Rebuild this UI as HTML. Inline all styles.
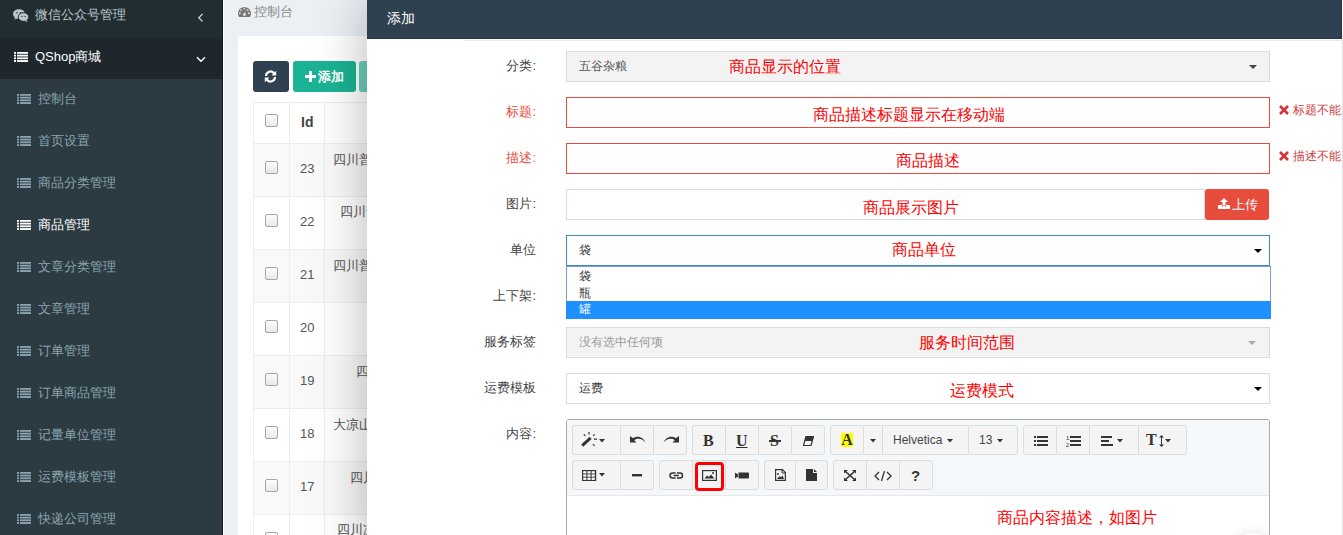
<!DOCTYPE html>
<html><head><meta charset="utf-8">
<style>
*{box-sizing:border-box;margin:0;padding:0}
html,body{width:1343px;height:535px;overflow:hidden;background:#ecf0f5;font-family:"Liberation Sans",sans-serif;font-size:13px;color:#676a6c}
.abs{position:absolute}
#sb{position:absolute;left:0;top:0;width:222px;height:535px;background:#222d32}
#sbline{position:absolute;left:222px;top:0;width:1px;height:535px;background:#151c20}
#sbline2{position:absolute;left:223px;top:0;width:1px;height:535px;background:#fff}
.mi{position:absolute;left:0;width:222px;color:#b8c7ce;font-size:13px;line-height:20px}
.sub{position:absolute;left:0;width:222px;color:#8aa4af;font-size:13px;line-height:20px}
.lic{position:absolute;width:14px;height:10px}
.lic i{position:absolute;left:0;width:14px;height:2px;background:currentColor}
.txt{position:absolute;white-space:nowrap}
/* content */
#box{position:absolute;left:238px;top:36px;width:200px;height:520px;background:#fff;border-radius:3px}
.btn{position:absolute;border-radius:3px;color:#fff}
table{border-collapse:collapse}
/* dialog */
#dlg{position:absolute;left:367px;top:0;width:975px;height:560px;background:#fff;overflow:hidden;box-shadow:1px 1px 50px rgba(0,0,0,.3)}
#dhd{position:absolute;left:0;top:0;width:975px;height:39px;background:#2f4050;color:#fff;font-size:14px;font-weight:normal}
.lbl{position:absolute;width:120px;text-align:right;font-size:13px;color:#333;white-space:nowrap}
.inp{position:absolute;left:199px;width:704px;height:31px;border:1px solid #e5e6e7;background:#fff}
.red{color:#cc5965}
.ann{position:absolute;color:#ff0000;font-size:16px;white-space:nowrap;line-height:18px}
.caret{position:absolute;width:0;height:0;border-left:4px solid transparent;border-right:4px solid transparent;border-top:4px solid #333}
.cb{width:13px;height:13px;border:1px solid #a6a6a6;border-radius:2px;background:linear-gradient(#fdfdfd,#e8e8e8)}
</style></head><body>
<div id="sb">
<div class="abs" style="left:0;top:37px;width:222px;height:42px;background:#1e282c"></div>
<div class="abs" style="left:0;top:79px;width:222px;height:456px;background:#2c3b41"></div>
<svg class="abs" style="left:13px;top:9px" width="16" height="13" viewBox="0 0 16 13"><ellipse cx="6" cy="5" rx="6" ry="4.8" fill="#b8c7ce"/><path d="M2 8 L1.5 10.5 L4.5 9 Z" fill="#b8c7ce"/><ellipse cx="10.5" cy="8" rx="5.3" ry="4.3" fill="#b8c7ce" stroke="#222d32" stroke-width="1"/><path d="M13.5 11 L14.5 13 L11.5 12 Z" fill="#b8c7ce"/><circle cx="4" cy="3.8" r=".8" fill="#222d32"/><circle cx="7.6" cy="3.8" r=".8" fill="#222d32"/><circle cx="9" cy="7.4" r=".7" fill="#222d32"/><circle cx="12.2" cy="7.4" r=".7" fill="#222d32"/></svg>
<div class="txt" style="left:35px;top:5px;color:#b8c7ce;font-size:13px;line-height:20px">微信公众号管理</div>
<svg class="abs" style="left:197px;top:13px" width="7" height="10" viewBox="0 0 7 10"><path d="M5.5 1 L1.8 4.8 L5.5 8.6" fill="none" stroke="#b8c7ce" stroke-width="1.4"/></svg>
<svg class="abs" style="left:14px;top:52px" width="14" height="10" viewBox="0 0 14 10" fill="#fff"><rect x="0" y="0" width="2" height="1.8"/><rect x="3" y="0" width="11" height="1.8"/><rect x="0" y="2.7" width="2" height="1.8"/><rect x="3" y="2.7" width="11" height="1.8"/><rect x="0" y="5.4" width="2" height="1.8"/><rect x="3" y="5.4" width="11" height="1.8"/><rect x="0" y="8.1" width="2" height="1.9"/><rect x="3" y="8.1" width="11" height="1.9"/></svg>
<div class="txt" style="left:35px;top:47px;color:#fff;font-size:13px;line-height:20px;font-weight:normal">QShop商城</div>
<svg class="abs" style="left:196px;top:56px" width="10" height="7" viewBox="0 0 10 7"><path d="M1 1.2 L5 5.2 L9 1.2" fill="none" stroke="#fff" stroke-width="1.4"/></svg>
<svg class="abs" style="left:17px;top:94px" width="14" height="10" viewBox="0 0 14 10" fill="#8aa4af"><rect x="0" y="0" width="2" height="1.8"/><rect x="3" y="0" width="11" height="1.8"/><rect x="0" y="2.7" width="2" height="1.8"/><rect x="3" y="2.7" width="11" height="1.8"/><rect x="0" y="5.4" width="2" height="1.8"/><rect x="3" y="5.4" width="11" height="1.8"/><rect x="0" y="8.1" width="2" height="1.9"/><rect x="3" y="8.1" width="11" height="1.9"/></svg>
<div class="txt" style="left:38px;top:89px;color:#8aa4af;font-size:13px;line-height:20px;font-weight:normal">控制台</div>
<svg class="abs" style="left:17px;top:136px" width="14" height="10" viewBox="0 0 14 10" fill="#8aa4af"><rect x="0" y="0" width="2" height="1.8"/><rect x="3" y="0" width="11" height="1.8"/><rect x="0" y="2.7" width="2" height="1.8"/><rect x="3" y="2.7" width="11" height="1.8"/><rect x="0" y="5.4" width="2" height="1.8"/><rect x="3" y="5.4" width="11" height="1.8"/><rect x="0" y="8.1" width="2" height="1.9"/><rect x="3" y="8.1" width="11" height="1.9"/></svg>
<div class="txt" style="left:38px;top:131px;color:#8aa4af;font-size:13px;line-height:20px;font-weight:normal">首页设置</div>
<svg class="abs" style="left:17px;top:178px" width="14" height="10" viewBox="0 0 14 10" fill="#8aa4af"><rect x="0" y="0" width="2" height="1.8"/><rect x="3" y="0" width="11" height="1.8"/><rect x="0" y="2.7" width="2" height="1.8"/><rect x="3" y="2.7" width="11" height="1.8"/><rect x="0" y="5.4" width="2" height="1.8"/><rect x="3" y="5.4" width="11" height="1.8"/><rect x="0" y="8.1" width="2" height="1.9"/><rect x="3" y="8.1" width="11" height="1.9"/></svg>
<div class="txt" style="left:38px;top:173px;color:#8aa4af;font-size:13px;line-height:20px;font-weight:normal">商品分类管理</div>
<svg class="abs" style="left:17px;top:220px" width="14" height="10" viewBox="0 0 14 10" fill="#fff"><rect x="0" y="0" width="2" height="1.8"/><rect x="3" y="0" width="11" height="1.8"/><rect x="0" y="2.7" width="2" height="1.8"/><rect x="3" y="2.7" width="11" height="1.8"/><rect x="0" y="5.4" width="2" height="1.8"/><rect x="3" y="5.4" width="11" height="1.8"/><rect x="0" y="8.1" width="2" height="1.9"/><rect x="3" y="8.1" width="11" height="1.9"/></svg>
<div class="txt" style="left:38px;top:215px;color:#fff;font-size:13px;line-height:20px;font-weight:normal">商品管理</div>
<svg class="abs" style="left:17px;top:262px" width="14" height="10" viewBox="0 0 14 10" fill="#8aa4af"><rect x="0" y="0" width="2" height="1.8"/><rect x="3" y="0" width="11" height="1.8"/><rect x="0" y="2.7" width="2" height="1.8"/><rect x="3" y="2.7" width="11" height="1.8"/><rect x="0" y="5.4" width="2" height="1.8"/><rect x="3" y="5.4" width="11" height="1.8"/><rect x="0" y="8.1" width="2" height="1.9"/><rect x="3" y="8.1" width="11" height="1.9"/></svg>
<div class="txt" style="left:38px;top:257px;color:#8aa4af;font-size:13px;line-height:20px;font-weight:normal">文章分类管理</div>
<svg class="abs" style="left:17px;top:304px" width="14" height="10" viewBox="0 0 14 10" fill="#8aa4af"><rect x="0" y="0" width="2" height="1.8"/><rect x="3" y="0" width="11" height="1.8"/><rect x="0" y="2.7" width="2" height="1.8"/><rect x="3" y="2.7" width="11" height="1.8"/><rect x="0" y="5.4" width="2" height="1.8"/><rect x="3" y="5.4" width="11" height="1.8"/><rect x="0" y="8.1" width="2" height="1.9"/><rect x="3" y="8.1" width="11" height="1.9"/></svg>
<div class="txt" style="left:38px;top:299px;color:#8aa4af;font-size:13px;line-height:20px;font-weight:normal">文章管理</div>
<svg class="abs" style="left:17px;top:346px" width="14" height="10" viewBox="0 0 14 10" fill="#8aa4af"><rect x="0" y="0" width="2" height="1.8"/><rect x="3" y="0" width="11" height="1.8"/><rect x="0" y="2.7" width="2" height="1.8"/><rect x="3" y="2.7" width="11" height="1.8"/><rect x="0" y="5.4" width="2" height="1.8"/><rect x="3" y="5.4" width="11" height="1.8"/><rect x="0" y="8.1" width="2" height="1.9"/><rect x="3" y="8.1" width="11" height="1.9"/></svg>
<div class="txt" style="left:38px;top:341px;color:#8aa4af;font-size:13px;line-height:20px;font-weight:normal">订单管理</div>
<svg class="abs" style="left:17px;top:388px" width="14" height="10" viewBox="0 0 14 10" fill="#8aa4af"><rect x="0" y="0" width="2" height="1.8"/><rect x="3" y="0" width="11" height="1.8"/><rect x="0" y="2.7" width="2" height="1.8"/><rect x="3" y="2.7" width="11" height="1.8"/><rect x="0" y="5.4" width="2" height="1.8"/><rect x="3" y="5.4" width="11" height="1.8"/><rect x="0" y="8.1" width="2" height="1.9"/><rect x="3" y="8.1" width="11" height="1.9"/></svg>
<div class="txt" style="left:38px;top:383px;color:#8aa4af;font-size:13px;line-height:20px;font-weight:normal">订单商品管理</div>
<svg class="abs" style="left:17px;top:430px" width="14" height="10" viewBox="0 0 14 10" fill="#8aa4af"><rect x="0" y="0" width="2" height="1.8"/><rect x="3" y="0" width="11" height="1.8"/><rect x="0" y="2.7" width="2" height="1.8"/><rect x="3" y="2.7" width="11" height="1.8"/><rect x="0" y="5.4" width="2" height="1.8"/><rect x="3" y="5.4" width="11" height="1.8"/><rect x="0" y="8.1" width="2" height="1.9"/><rect x="3" y="8.1" width="11" height="1.9"/></svg>
<div class="txt" style="left:38px;top:425px;color:#8aa4af;font-size:13px;line-height:20px;font-weight:normal">记量单位管理</div>
<svg class="abs" style="left:17px;top:472px" width="14" height="10" viewBox="0 0 14 10" fill="#8aa4af"><rect x="0" y="0" width="2" height="1.8"/><rect x="3" y="0" width="11" height="1.8"/><rect x="0" y="2.7" width="2" height="1.8"/><rect x="3" y="2.7" width="11" height="1.8"/><rect x="0" y="5.4" width="2" height="1.8"/><rect x="3" y="5.4" width="11" height="1.8"/><rect x="0" y="8.1" width="2" height="1.9"/><rect x="3" y="8.1" width="11" height="1.9"/></svg>
<div class="txt" style="left:38px;top:467px;color:#8aa4af;font-size:13px;line-height:20px;font-weight:normal">运费模板管理</div>
<svg class="abs" style="left:17px;top:514px" width="14" height="10" viewBox="0 0 14 10" fill="#8aa4af"><rect x="0" y="0" width="2" height="1.8"/><rect x="3" y="0" width="11" height="1.8"/><rect x="0" y="2.7" width="2" height="1.8"/><rect x="3" y="2.7" width="11" height="1.8"/><rect x="0" y="5.4" width="2" height="1.8"/><rect x="3" y="5.4" width="11" height="1.8"/><rect x="0" y="8.1" width="2" height="1.9"/><rect x="3" y="8.1" width="11" height="1.9"/></svg>
<div class="txt" style="left:38px;top:509px;color:#8aa4af;font-size:13px;line-height:20px;font-weight:normal">快递公司管理</div>
</div>
<div id="sbline"></div><div id="sbline2"></div>
<svg class="abs" style="left:238px;top:7px" width="13" height="10" viewBox="0 0 13 10"><path d="M1 10 A6.5 6.5 0 1 1 12 10 Z" fill="#777"/><circle cx="6.4" cy="1.5" r=".85" fill="#eef1f5"/><circle cx="3" cy="3" r=".85" fill="#eef1f5"/><circle cx="9.6" cy="3" r=".85" fill="#eef1f5"/><circle cx="1.9" cy="6.2" r=".85" fill="#eef1f5"/><circle cx="10.9" cy="6.2" r=".85" fill="#eef1f5"/><circle cx="6.4" cy="7.6" r="1.3" fill="#eef1f5"/><path d="M6.1 7.4 L7.6 3.2 L7.1 7.6 Z" fill="#eef1f5"/></svg>
<div class="txt" style="left:254px;top:2px;color:#888;font-size:13px;line-height:20px">控制台</div>
<div id="box"></div>
<div class="btn" style="left:253px;top:61px;width:36px;height:31px;background:#2f4050"><svg class="abs" style="left:11px;top:9px" width="13" height="13" viewBox="0 0 13 13"><path d="M2 6 A4.5 4.5 0 0 1 10.3 3.6" fill="none" stroke="#fff" stroke-width="2.2"/><path d="M12.2 0.8 L12.2 5.5 L7.5 5.5 Z" fill="#fff"/><path d="M11 7 A4.5 4.5 0 0 1 2.7 9.4" fill="none" stroke="#fff" stroke-width="2.2"/><path d="M0.8 12.2 L0.8 7.5 L5.5 7.5 Z" fill="#fff"/></svg></div>
<div class="btn" style="left:293px;top:61px;width:63px;height:31px;background:#1ab394"><svg class="abs" style="left:12px;top:10px" width="11" height="11" viewBox="0 0 11 11"><rect x="4" y="0" width="3" height="11" fill="#fff"/><rect x="0" y="4" width="11" height="3" fill="#fff"/></svg><span class="txt" style="left:25px;top:6px;font-size:13px;line-height:20px;color:#fff;font-weight:bold">添加</span></div>
<div class="btn" style="left:359px;top:61px;width:60px;height:31px;background:#1ab394;opacity:.65"></div>
<div class="abs" style="left:253px;top:102px;width:200px;height:433px;background:#fff;border-left:1px solid #ededed;border-top:1px solid #ededed"></div>
<div class="abs" style="left:254px;top:143px;width:200px;height:53px;background:#f9f9f9;border-top:1px solid #ededed"></div>
<div class="abs cb" style="left:265px;top:161px"></div>
<div class="txt" style="left:300px;top:159px;font-size:13px;line-height:20px;color:#555">23</div>
<div class="txt" style="left:333px;top:150px;font-size:13px;line-height:20px;color:#555">四川普江</div>
<div class="abs" style="left:254px;top:196px;width:200px;height:53px;background:#fff;border-top:1px solid #ededed"></div>
<div class="abs cb" style="left:265px;top:214px"></div>
<div class="txt" style="left:300px;top:212px;font-size:13px;line-height:20px;color:#555">22</div>
<div class="txt" style="left:340px;top:202px;font-size:13px;line-height:20px;color:#555">四川普江</div>
<div class="abs" style="left:254px;top:249px;width:200px;height:53px;background:#f9f9f9;border-top:1px solid #ededed"></div>
<div class="abs cb" style="left:265px;top:267px"></div>
<div class="txt" style="left:300px;top:265px;font-size:13px;line-height:20px;color:#555">21</div>
<div class="txt" style="left:333px;top:256px;font-size:13px;line-height:20px;color:#555">四川普江</div>
<div class="abs" style="left:254px;top:302px;width:200px;height:53px;background:#fff;border-top:1px solid #ededed"></div>
<div class="abs cb" style="left:265px;top:320px"></div>
<div class="txt" style="left:300px;top:318px;font-size:13px;line-height:20px;color:#555">20</div>
<div class="abs" style="left:254px;top:355px;width:200px;height:53px;background:#f9f9f9;border-top:1px solid #ededed"></div>
<div class="abs cb" style="left:265px;top:373px"></div>
<div class="txt" style="left:300px;top:371px;font-size:13px;line-height:20px;color:#555">19</div>
<div class="txt" style="left:356px;top:362px;font-size:13px;line-height:20px;color:#555">四</div>
<div class="abs" style="left:254px;top:408px;width:200px;height:53px;background:#fff;border-top:1px solid #ededed"></div>
<div class="abs cb" style="left:265px;top:426px"></div>
<div class="txt" style="left:300px;top:424px;font-size:13px;line-height:20px;color:#555">18</div>
<div class="txt" style="left:333px;top:415px;font-size:13px;line-height:20px;color:#555">大凉山</div>
<div class="abs" style="left:254px;top:461px;width:200px;height:53px;background:#f9f9f9;border-top:1px solid #ededed"></div>
<div class="abs cb" style="left:265px;top:479px"></div>
<div class="txt" style="left:300px;top:477px;font-size:13px;line-height:20px;color:#555">17</div>
<div class="txt" style="left:350px;top:468px;font-size:13px;line-height:20px;color:#555">四川普江</div>
<div class="abs" style="left:254px;top:514px;width:200px;height:53px;background:#fff;border-top:1px solid #ededed"></div>
<div class="abs cb" style="left:265px;top:532px"></div>
<div class="txt" style="left:337px;top:520px;font-size:13px;line-height:20px;color:#555">四川凉山</div>
<div class="abs cb" style="left:265px;top:114px"></div>
<div class="txt" style="left:301px;top:112px;font-size:14px;line-height:20px;color:#444;font-weight:bold">Id</div>
<div class="abs" style="left:289px;top:102px;width:1px;height:433px;background:#ededed"></div>
<div class="abs" style="left:324px;top:102px;width:1px;height:433px;background:#ededed"></div>

<div id="dlg">
  <div id="dhd"><div class="abs" style="left:0;top:38px;width:975px;height:1px;background:#283747"></div><div class="abs" style="left:974px;top:0;width:1px;height:39px;background:#283747"></div><span class="txt" style="left:20px;top:10px">添加</span></div>
<div class="abs" style="left:98px;top:40px;width:877px;height:1px;background:#e7eaec"></div>
<div class="lbl" style="left:49px;top:56px;line-height:20px;color:#444">分类:</div>
<div class="lbl" style="left:49px;top:102px;line-height:20px;color:#e74c3c">标题:</div>
<div class="lbl" style="left:49px;top:148px;line-height:20px;color:#e74c3c">描述:</div>
<div class="lbl" style="left:49px;top:194px;line-height:20px;color:#444">图片:</div>
<div class="lbl" style="left:49px;top:240px;line-height:20px;color:#444">单位</div>
<div class="lbl" style="left:49px;top:286px;line-height:20px;color:#444">上下架:</div>
<div class="lbl" style="left:49px;top:332px;line-height:20px;color:#444">服务标签</div>
<div class="lbl" style="left:49px;top:378px;line-height:20px;color:#444">运费模板</div>
<div class="lbl" style="left:49px;top:424px;line-height:20px;color:#444">内容:</div>
<div class="abs" style="left:199px;top:51px;width:704px;height:31px;border:1px solid #dcdcdc;background:#f3f3f3;"></div>
<div class="txt" style="left:212px;top:56px;line-height:20px;font-size:12px;color:#555">五谷杂粮</div>
<div class="caret" style="left:882px;top:65px;border-top-color:#444"></div>
<div class="abs" style="left:199px;top:97px;width:704px;height:31px;border:1px solid #e74c3c;background:#fff;"></div>
<div class="abs" style="left:199px;top:143px;width:704px;height:31px;border:1px solid #e74c3c;background:#fff;"></div>
<div class="abs" style="left:199px;top:189px;width:639px;height:31px;border:1px solid #d5dbe3;background:#fff;"></div>
<div class="btn" style="left:838px;top:189px;width:64px;height:31px;background:#e74c3c"><svg class="abs" style="left:13px;top:9px" width="12" height="11" viewBox="0 0 12 11"><path d="M6 0 L10 4 L7.5 4 L7.5 7.5 L4.5 7.5 L4.5 4 L2 4 Z" fill="#fff"/><path d="M0 7 L4 7 L4 8.2 L8 8.2 L8 7 L12 7 L12 11 L0 11 Z" fill="#fff"/></svg><span class="txt" style="left:27px;top:6px;line-height:20px;font-size:13px;color:#fff;font-weight:normal">上传</span></div>
<div class="abs" style="left:199px;top:235px;width:704px;height:31px;border:1px solid #3c8dbc;background:#fff;"></div>
<div class="txt" style="left:212px;top:240px;line-height:20px;font-size:12px;color:#333">袋</div>
<div class="caret" style="left:887px;top:249px;border-top-color:#000"></div>
<div class="abs" style="left:199px;top:266px;width:705px;height:53px;background:#fff;border:1px solid #7a9cd3"></div>
<div class="abs" style="left:199px;top:301px;width:705px;height:18px;background:#1e90ff"></div>
<div class="txt" style="left:212px;top:268px;line-height:17px;font-size:12px;color:#333">袋</div>
<div class="txt" style="left:212px;top:285px;line-height:17px;font-size:12px;color:#333">瓶</div>
<div class="txt" style="left:212px;top:301px;line-height:17px;font-size:12px;color:#fff">罐</div>
<div class="abs" style="left:199px;top:327px;width:704px;height:31px;border:1px solid #dcdcdc;background:#f3f3f3;"></div>
<div class="txt" style="left:212px;top:332px;line-height:20px;font-size:12px;color:#999">没有选中任何项</div>
<div class="caret" style="left:881px;top:341px;border-top-color:#aaa"></div>
<div class="abs" style="left:199px;top:373px;width:704px;height:31px;border:1px solid #d5dbe3;background:#fff;"></div>
<div class="txt" style="left:212px;top:378px;line-height:20px;font-size:12px;color:#333">运费</div>
<div class="caret" style="left:887px;top:387px;border-top-color:#000"></div>
<svg class="abs" style="left:912px;top:105px" width="10" height="10" viewBox="0 0 10 10"><path d="M1 1 L9 9 M9 1 L1 9" stroke="#d0343a" stroke-width="2.6"/></svg>
<div class="txt" style="left:926px;top:101px;line-height:18px;font-size:12px;color:#d03a3a">标题不能为空</div>
<svg class="abs" style="left:912px;top:151px" width="10" height="10" viewBox="0 0 10 10"><path d="M1 1 L9 9 M9 1 L1 9" stroke="#d0343a" stroke-width="2.6"/></svg>
<div class="txt" style="left:926px;top:147px;line-height:18px;font-size:12px;color:#d03a3a">描述不能为空</div>
<div class="abs" style="left:199px;top:419px;width:704px;height:140px;border:1px solid #a9a9a9;border-radius:3px;background:#fff"></div>
<div class="abs" style="left:200px;top:420px;width:702px;height:76px;background:#f5f8fa;border-bottom:1px solid #e5e9ec;border-radius:2px 2px 0 0"></div>
<div class="abs" style="left:205px;top:425px;width:115px;height:30px;background:#f4f4f4;border:1px solid #dcdcdc;border-radius:3px"></div>
<div class="abs" style="left:253px;top:425px;width:1px;height:30px;background:#dcdcdc"></div>
<div class="abs" style="left:286px;top:425px;width:1px;height:30px;background:#dcdcdc"></div>
<div class="abs" style="left:325px;top:425px;width:133px;height:30px;background:#f4f4f4;border:1px solid #dcdcdc;border-radius:3px"></div>
<div class="abs" style="left:358px;top:425px;width:1px;height:30px;background:#dcdcdc"></div>
<div class="abs" style="left:391px;top:425px;width:1px;height:30px;background:#dcdcdc"></div>
<div class="abs" style="left:424px;top:425px;width:1px;height:30px;background:#dcdcdc"></div>
<div class="abs" style="left:463px;top:425px;width:188px;height:30px;background:#f4f4f4;border:1px solid #dcdcdc;border-radius:3px"></div>
<div class="abs" style="left:496px;top:425px;width:1px;height:30px;background:#dcdcdc"></div>
<div class="abs" style="left:515px;top:425px;width:1px;height:30px;background:#dcdcdc"></div>
<div class="abs" style="left:601px;top:425px;width:1px;height:30px;background:#dcdcdc"></div>
<div class="abs" style="left:656px;top:425px;width:164px;height:30px;background:#f4f4f4;border:1px solid #dcdcdc;border-radius:3px"></div>
<div class="abs" style="left:689px;top:425px;width:1px;height:30px;background:#dcdcdc"></div>
<div class="abs" style="left:722px;top:425px;width:1px;height:30px;background:#dcdcdc"></div>
<div class="abs" style="left:771px;top:425px;width:1px;height:30px;background:#dcdcdc"></div>
<div class="abs" style="left:205px;top:460px;width:82px;height:30px;background:#f4f4f4;border:1px solid #dcdcdc;border-radius:3px"></div>
<div class="abs" style="left:253px;top:460px;width:1px;height:30px;background:#dcdcdc"></div>
<div class="abs" style="left:292px;top:460px;width:100px;height:30px;background:#f4f4f4;border:1px solid #dcdcdc;border-radius:3px"></div>
<div class="abs" style="left:325px;top:460px;width:1px;height:30px;background:#dcdcdc"></div>
<div class="abs" style="left:358px;top:460px;width:1px;height:30px;background:#dcdcdc"></div>
<div class="abs" style="left:397px;top:460px;width:64px;height:30px;background:#f4f4f4;border:1px solid #dcdcdc;border-radius:3px"></div>
<div class="abs" style="left:428px;top:460px;width:1px;height:30px;background:#dcdcdc"></div>
<div class="abs" style="left:466px;top:460px;width:100px;height:30px;background:#f4f4f4;border:1px solid #dcdcdc;border-radius:3px"></div>
<div class="abs" style="left:499px;top:460px;width:1px;height:30px;background:#dcdcdc"></div>
<div class="abs" style="left:532px;top:460px;width:1px;height:30px;background:#dcdcdc"></div>
<svg class="abs" style="left:214px;top:432px" width="16" height="15" viewBox="0 0 16 15"><path d="M1.2 13.6 L9.6 5.9" stroke="#333" stroke-width="3"/><path d="M8 0.1 V2.5 M2.8 2.3 L4.3 3.9 M13.6 2.3 L12.1 3.9 M13 7.2 H16 M11.9 12.2 L13.6 13.9" stroke="#333" stroke-width="1.2"/></svg>
<svg class="abs" style="left:232px;top:439px" width="6" height="4" viewBox="0 0 6 4"><path d="M0 0 L6 0 L3 3.6 Z" fill="#333"/></svg>
<svg class="abs" style="left:263px;top:435px" width="16" height="8" viewBox="0 0 16 8"><path d="M0 1 L0 7.5 L6.5 7.5 L4.3 5.3 C7.5 2.8 12.5 3.5 15.5 7.8 C13.5 2.2 7.5 0 3 3.3 Z" fill="#333"/></svg>
<svg class="abs" style="left:296px;top:435px" width="16" height="8" viewBox="0 0 16 8"><path d="M16 1 L16 7.5 L9.5 7.5 L11.7 5.3 C8.5 2.8 3.5 3.5 0.5 7.8 C2.5 2.2 8.5 0 13 3.3 Z" fill="#333"/></svg>
<div class="txt" style="left:336px;top:432px;font-family:'Liberation Serif',serif;font-weight:bold;font-size:16px;line-height:18px;color:#333">B</div>
<div class="txt" style="left:369px;top:432px;font-family:'Liberation Serif',serif;font-weight:bold;font-size:16px;line-height:18px;color:#333;text-decoration:underline">U</div>
<div class="txt" style="left:403px;top:432px;font-family:'Liberation Serif',serif;font-weight:bold;font-size:16px;line-height:18px;color:#333">S</div><div class="abs" style="left:402px;top:440px;width:12px;height:1.5px;background:#333"></div>
<svg class="abs" style="left:436px;top:436px" width="11" height="10" viewBox="0 0 11 10"><path d="M3 0.5 L10.5 0.5 L8 9.5 L0.5 9.5 Z" fill="none" stroke="#333" stroke-width="1.2" stroke-linejoin="round"/><path d="M3 0.5 L10.5 0.5 L9.2 5 L1.8 5 Z" fill="#333"/></svg>
<div class="abs" style="left:474px;top:433px;width:12px;height:14px;background:#ff0"></div>
<div class="txt" style="left:474px;top:431px;width:12px;text-align:center;font-family:'Liberation Serif',serif;font-weight:bold;font-size:16px;line-height:18px;color:#333">A</div>
<svg class="abs" style="left:503px;top:439px" width="6" height="4" viewBox="0 0 6 4"><path d="M0 0 L6 0 L3 3.6 Z" fill="#333"/></svg>
<div class="txt" style="left:526px;top:430px;font-size:12px;line-height:20px;color:#444">Helvetica</div>
<svg class="abs" style="left:580px;top:439px" width="6" height="4" viewBox="0 0 6 4"><path d="M0 0 L6 0 L3 3.6 Z" fill="#333"/></svg>
<div class="txt" style="left:612px;top:430px;font-size:12px;line-height:20px;color:#444">13</div>
<svg class="abs" style="left:630px;top:439px" width="6" height="4" viewBox="0 0 6 4"><path d="M0 0 L6 0 L3 3.6 Z" fill="#333"/></svg>
<svg class="abs" style="left:667px;top:436px" width="14" height="10" viewBox="0 0 14 10"><rect x="0" y="0" width="2" height="2" fill="#333"/><rect x="3" y="0" width="11" height="2" fill="#333"/><rect x="0" y="4" width="2" height="2" fill="#333"/><rect x="3" y="4" width="11" height="2" fill="#333"/><rect x="0" y="8" width="2" height="2" fill="#333"/><rect x="3" y="8" width="11" height="2" fill="#333"/></svg>
<svg class="abs" style="left:699px;top:435px" width="15" height="12" viewBox="0 0 15 12"><text x="0" y="5" font-size="6" font-family="Liberation Sans" fill="#333">1</text><text x="-0.3" y="11.5" font-size="6" font-family="Liberation Sans" fill="#333">2</text><rect x="4" y="1" width="11" height="2" fill="#333"/><rect x="4" y="5" width="11" height="2" fill="#333"/><rect x="4" y="9" width="11" height="2" fill="#333"/></svg>
<svg class="abs" style="left:734px;top:436px" width="12" height="10" viewBox="0 0 12 10"><rect x="0" y="0" width="11" height="2" fill="#333"/><rect x="0" y="4" width="8" height="2" fill="#333"/><rect x="0" y="8" width="12" height="2" fill="#333"/></svg>
<svg class="abs" style="left:750px;top:439px" width="6" height="4" viewBox="0 0 6 4"><path d="M0 0 L6 0 L3 3.6 Z" fill="#333"/></svg>
<div class="txt" style="left:779px;top:431px;font-family:'Liberation Serif',serif;font-weight:bold;font-size:16px;line-height:18px;color:#333">T</div>
<svg class="abs" style="left:792px;top:435px" width="5" height="12" viewBox="0 0 5 12"><path d="M2.5 0 L5 2.5 L3 2.5 L3 9.5 L5 9.5 L2.5 12 L0 9.5 L2 9.5 L2 2.5 L0 2.5 Z" fill="#333"/></svg>
<svg class="abs" style="left:798px;top:439px" width="6" height="4" viewBox="0 0 6 4"><path d="M0 0 L6 0 L3 3.6 Z" fill="#333"/></svg>
<svg class="abs" style="left:215px;top:470px" width="15" height="11" viewBox="0 0 15 11"><rect x="0" y="0" width="14.2" height="11" fill="#333"/><rect x="1.2" y="1.2" width="3.2" height="2.3" fill="#fff"/><rect x="5.4" y="1.2" width="3.2" height="2.3" fill="#fff"/><rect x="9.6" y="1.2" width="3.2" height="2.3" fill="#fff"/><rect x="1.2" y="4.4" width="3.2" height="2.3" fill="#fff"/><rect x="5.4" y="4.4" width="3.2" height="2.3" fill="#fff"/><rect x="9.6" y="4.4" width="3.2" height="2.3" fill="#fff"/><rect x="1.2" y="7.6" width="3.2" height="2.3" fill="#fff"/><rect x="5.4" y="7.6" width="3.2" height="2.3" fill="#fff"/><rect x="9.6" y="7.6" width="3.2" height="2.3" fill="#fff"/></svg>
<svg class="abs" style="left:232px;top:473px" width="6" height="4" viewBox="0 0 6 4"><path d="M0 0 L6 0 L3 3.6 Z" fill="#333"/></svg>
<svg class="abs" style="left:265px;top:474px" width="10" height="3" viewBox="0 0 10 3"><rect x="0" y="0" width="10" height="2.4" fill="#333"/></svg>
<svg class="abs" style="left:302px;top:472px" width="15" height="7" viewBox="0 0 15 7"><path d="M6.6 1 H3.5 A2.5 2.5 0 0 0 3.5 6 H6.6 M7.9 1 H11 A2.5 2.5 0 0 1 11 6 H7.9 M4.6 3.5 H9.9" fill="none" stroke="#333" stroke-width="1.5"/></svg>
<svg class="abs" style="left:335px;top:470px" width="15" height="11" viewBox="0 0 15 11"><rect x="0.6" y="0.6" width="13.8" height="9.8" fill="none" stroke="#333" stroke-width="1.2"/><path d="M2.5 8.5 L5 5.5 L6.8 7 L9 4.5 L12.5 8.5 Z" fill="#333"/><circle cx="11" cy="3" r="1" fill="#333"/></svg>
<div class="abs" style="left:328px;top:462px;width:29px;height:29px;border:3px solid #f00;border-radius:4px"></div>
<svg class="abs" style="left:368px;top:472px" width="14" height="7" viewBox="0 0 14 7"><path d="M3.5 0.5 H13 A1 1 0 0 1 14 1.5 V5.5 A1 1 0 0 1 13 6.5 H3.5 Z" fill="#333"/><path d="M0 0.5 L3 2.5 L3 4.5 L0 6.5 Z" fill="#333"/></svg>
<svg class="abs" style="left:408px;top:469px" width="11" height="12" viewBox="0 0 11 12"><path d="M0.6 0.6 H7.5 L10.4 3.5 V11.4 H0.6 Z" fill="none" stroke="#333" stroke-width="1.2"/><path d="M7 0.6 V4 H10.4" fill="none" stroke="#333" stroke-width="1"/><path d="M2 10 L4.5 7 L6 8.3 L7.5 6.5 L9 10 Z" fill="#333"/><circle cx="3" cy="5" r="1" fill="#333"/></svg>
<svg class="abs" style="left:439px;top:469px" width="11" height="12" viewBox="0 0 11 12"><path d="M0 0 H7 V4 H11 V12 H0 Z M8 0 L11 3 H8 Z" fill="#333"/></svg>
<svg class="abs" style="left:477px;top:470px" width="12" height="11" viewBox="0 0 12 11"><path d="M1.5 1.5 L10.5 9.5 M10.5 1.5 L1.5 9.5" stroke="#333" stroke-width="1.6"/><path d="M0 0 H4 L0 3.5 Z M12 0 H8 L12 3.5 Z M0 11 H4 L0 7.5 Z M12 11 H8 L12 7.5 Z" fill="#333"/></svg>
<svg class="abs" style="left:507px;top:471px" width="18" height="10" viewBox="0 0 18 10"><path d="M5 1 L1 5 L5 9 M13 1 L17 5 L13 9 M10.5 0 L7.5 10" fill="none" stroke="#333" stroke-width="1.3"/></svg>
<div class="txt" style="left:544px;top:467px;font-weight:bold;font-size:15px;line-height:18px;color:#333">?</div>
<div class="ann" style="left:362px;top:58px">商品显示的位置</div>
<div class="ann" style="left:446px;top:106px">商品描述标题显示在移动端</div>
<div class="ann" style="left:529px;top:152px">商品描述</div>
<div class="ann" style="left:496px;top:199px">商品展示图片</div>
<div class="ann" style="left:525px;top:241px">商品单位</div>
<div class="ann" style="left:552px;top:334px">服务时间范围</div>
<div class="ann" style="left:583px;top:382px">运费模式</div>
<div class="ann" style="left:630px;top:509px">商品内容描述，如图片</div>
<div class="abs" style="left:200px;top:496px;width:702px;height:40px;overflow:hidden"><div class="abs" style="left:665px;top:37px;width:42px;height:42px;border-radius:50%;background:#fff;box-shadow:0 0 12px rgba(0,0,0,.12)"></div></div>
</div>
<div class="abs" style="left:1342px;top:0;width:1px;height:39px;background:#f6f7f8"></div><div class="abs" style="left:1342px;top:39px;width:1px;height:496px;background:#e3e3e3"></div>
</body></html>
